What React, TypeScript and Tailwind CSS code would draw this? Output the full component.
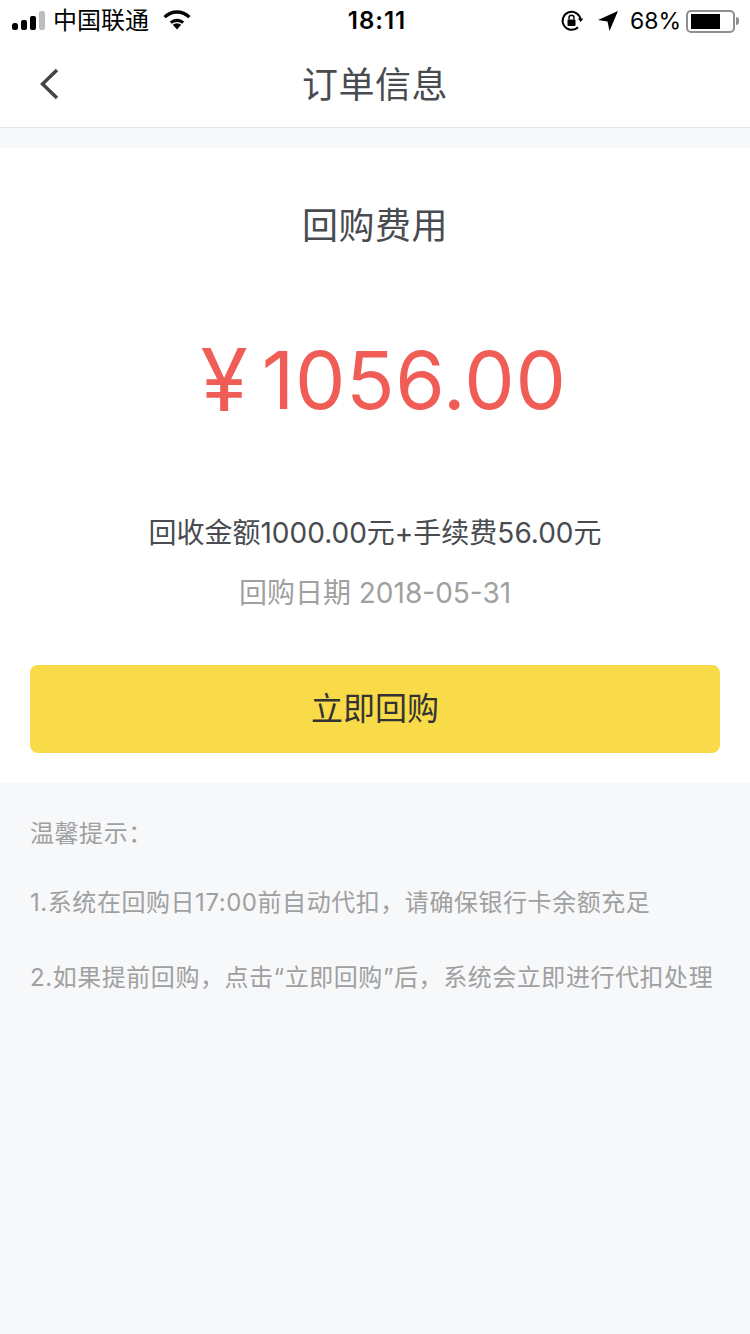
const FONT = "font-['Inter','Noto_Sans_CJK_SC',sans-serif]";

function StatusBar() {
  return (
    <div className="relative flex h-[41px] items-center justify-between pt-[1px] text-black">
      <div className="flex items-center pl-[12px]">
        <svg width="34" height="22" viewBox="0 0 34 22">
          <rect x="0" y="13" width="6" height="7" rx="2.5" fill="#000" />
          <rect x="9" y="10" width="6" height="10" rx="2" fill="#000" />
          <rect x="18" y="6" width="6" height="14" rx="2" fill="#000" />
          <rect x="27" y="1" width="6" height="19" rx="2" fill="#bdbdbd" />
        </svg>
        <span className="ml-[7px] text-[24px] leading-[40px]">中国联通</span>
        <svg className="ml-[13px] -mt-[2px]" width="30" height="22" viewBox="0 0 30 22">
          <path d="M15 20.5 L10.8 15.8 A6.4 6.4 0 0 1 19.2 15.8 Z" fill="#000" />
          <path d="M7.8 12.6 A10.8 10.8 0 0 1 22.2 12.6 L20.2 14.8 A8 8 0 0 0 9.8 14.8 Z" fill="#000" />
          <path d="M1.5 7 L3.7 9.3 A16 16 0 0 1 26.3 9.3 L28.5 7 A19 19 0 0 0 1.5 7 Z" fill="#000" />
        </svg>
      </div>
      <span className="absolute left-0 right-0 pl-[4px] text-center text-[24px] font-semibold leading-[40px] tracking-[1px]">18:11</span>
      <div className="flex items-center">
        <svg width="24" height="24" viewBox="0 0 24 24" fill="none">
          <path d="M20.6 11 A9 9 0 1 0 18 18.2" stroke="#000" strokeWidth="2" />
          <path d="M18 13 L23.5 13 L20.7 9.5 Z" fill="#000" transform="rotate(180 20.7 11.2)" />
          <rect x="7.5" y="10.5" width="8" height="6.5" rx="1" fill="#000" />
          <path d="M9 10.5 V8.8 A2.5 2.5 0 0 1 14 8.8 V10.5" stroke="#000" strokeWidth="1.4" />
        </svg>
        <svg className="ml-[13px]" width="22" height="22" viewBox="0 0 22 22">
          <path d="M21 1 L12.5 21 L10.5 11.5 L1 10 Z" fill="#000" />
        </svg>
        <span className="ml-[11px] text-[23px] leading-[40px]">68%</span>
        <div className="ml-[5px] flex h-[23px] w-[49px] items-center rounded-[5px] border-2 border-[#8f8f8f] pl-[3px]">
          <div className="h-[15px] w-[29px] bg-black" />
        </div>
        <div className="ml-[1px] mr-[11px] h-[8px] w-[3px] rounded-r-full bg-[#8f8f8f]" />
      </div>
    </div>
  );
}

export default function App() {
  return (
    <div className={`${FONT} flex min-h-[1334px] w-[750px] flex-col bg-[#f7f8fa]`}>
      <header className="bg-white">
        <StatusBar />
        <div className="relative flex h-[87px] items-center justify-center border-b border-[#e5e5e5]">
          <svg className="absolute left-[38px] top-[26px]" width="22" height="34" viewBox="0 0 22 34" fill="none">
            <path d="M19 3 L4.5 17 L19 31" stroke="#444" strokeWidth="3.4" />
          </svg>
          <h1 className="mt-[2px] text-[36px] font-normal leading-[50px] tracking-[0.5px] text-[#484b50]">订单信息</h1>
        </div>
      </header>

      <main className="mt-[20px] flex h-[635px] flex-col items-center bg-white px-[30px]">
        <h2 className="mt-[53px] text-[36px] font-normal leading-[50px] tracking-[0.5px] text-[#484b50]">回购费用</h2>
        <div className="mt-[77px] flex h-[104px] items-center pl-[17px] text-[#ef5d56]">
          <span className="text-[86px] font-normal leading-[104px]">¥</span>
          <span className="ml-[14px] text-[80px] font-normal leading-[104px] tracking-[0.6px]">1056.00</span>
        </div>
        <p className="mt-[79px] text-[28px] leading-[44px] text-[#484b50]">回收金额1000.00元+手续费56.00元</p>
        <p className="mt-[16px] text-[28px] leading-[44px] text-[#a0a0a0]">回购日期 2018-05-31</p>
        <button className="mt-[50px] h-[88px] w-full rounded-[8px] bg-[#f9da48] text-[32px] text-[#333333]">立即回购</button>
      </main>

      <section className="px-[30px] pt-[33px] text-[24px] leading-[36px] tracking-[0.55px] text-[#a0a0a0]">
        <p>温馨提示：</p>
        <p className="mt-[33px]">1.系统在回购日17:00前自动代扣，请确保银行卡余额充足</p>
        <p className="mt-[39px]">2.如果提前回购，点击“立即回购”后，系统会立即进行代扣处理</p>
      </section>
    </div>
  );
}
